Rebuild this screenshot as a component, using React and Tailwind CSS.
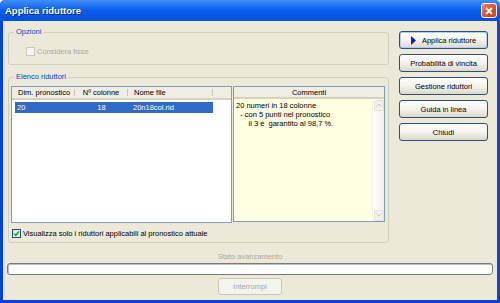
const listRows = [{ dim: "20", col: "18", file: "20n18col.rid" }];

const buttons = [
  "Applica riduttore",
  "Probabilità di vincita",
  "Gestione riduttori",
  "Guida in linea",
  "Chiudi",
];

function XpButton({ label, isDefault }) {
  return (
    <button
      type="button"
      className={
        "h-[18px] w-[89px] rounded-[3px] border border-[#2E5079] bg-gradient-to-b from-[#FFFFFF] via-[#F4F3EE] to-[#DCD8CC] text-black flex items-center justify-center gap-[6px] " +
        (isDefault ? "shadow-[inset_0_0_0_1px_#B4CDF0]" : "")
      }
    >
      {isDefault && (
        <svg width="5" height="9" viewBox="0 0 5 9">
          <polygon points="0,0 5,4.5 0,9" fill="#0B1FD6" />
        </svg>
      )}
      <span>{label}</span>
    </button>
  );
}

function Checkbox({ checked, disabled }) {
  return (
    <span
      className={
        "w-[9px] h-[9px] flex items-center justify-center border " +
        (disabled ? "border-[#CAC8BB] bg-[#F6F5F0]" : "border-[#1C5180] bg-gradient-to-br from-[#DCDCD7] to-[#FFFFFF]")
      }
    >
      {checked && (
        <svg width="7" height="7" viewBox="0 0 7 7">
          <polyline points="1,3.5 2.8,5.3 6,1.5" fill="none" stroke="#21A121" strokeWidth="1.6" />
        </svg>
      )}
    </span>
  );
}

export default function App() {
  return (
    <div className="w-[500px] h-[303px] flex flex-col bg-[#0842D6] font-[family-name:'Liberation_Sans',Arial,sans-serif] text-[7.5px] leading-[9px] text-black overflow-hidden rounded-t-[5px]">
      {/* title bar */}
      <div className="h-[21px] flex items-center justify-between bg-gradient-to-b from-[#3E8EF8] via-[#0A5CEE] to-[#0050E0]">
        <span className="pl-[5px] text-white font-bold text-[9.5px] [text-shadow:1px_1px_0_#0A2A8C]">
          Applica riduttore
        </span>
        <span className="mr-[3px] w-[16px] h-[15px] rounded-[3px] border border-white bg-gradient-to-br from-[#F0865E] via-[#E0552E] to-[#C6401C] flex items-center justify-center">
          <svg width="8" height="8" viewBox="0 0 8 8">
            <line x1="1" y1="1" x2="7" y2="7" stroke="white" strokeWidth="1.8" />
            <line x1="7" y1="1" x2="1" y2="7" stroke="white" strokeWidth="1.8" />
          </svg>
        </span>
      </div>

      {/* body */}
      <div className="flex-1 mx-[3px] mb-[3px] bg-[#ECE9D8] flex flex-col">
        <div className="flex px-[5px] gap-[10px]">
          <div className="w-[381px] flex flex-col">
            <fieldset className="mt-[6px] h-[38px] border border-[#D0D0BF] rounded-[3px]">
              <legend className="ml-[5px] px-[2px] leading-[10px] text-[#0046D5]">Opzioni</legend>
              <div className="mt-[10px] ml-[17px] flex items-center gap-[2px] text-[#ACA899]">
                <Checkbox disabled />
                <span>Considera fisse</span>
              </div>
            </fieldset>

            <fieldset className="mt-[7px] h-[171px] border border-[#D0D0BF] rounded-[3px]">
              <legend className="ml-[5px] px-[2px] leading-[10px] text-[#0046D5]">Elenco riduttori</legend>
              <div className="mt-[4px] ml-[2px] flex gap-[1px]">
                {/* list view */}
                <div className="w-[221px] h-[137px] border border-[#7F9DB9] bg-white flex flex-col">
                  <div className="h-[13px] flex bg-[#EFEDE4] border-b-2 border-[#D8D2BD]">
                    <div className="w-[63px] flex items-center pl-[6px] my-[2px] border-r border-[#C7C5B2]">Dim. pronostico</div>
                    <div className="w-[53px] flex items-center justify-center my-[2px] border-r border-[#C7C5B2]">Nº colonne</div>
                    <div className="w-[85px] flex items-center pl-[6px] my-[2px] border-r border-[#C7C5B2]">Nome file</div>
                    <div className="flex-1" />
                  </div>
                  <div className="mt-[2px]">
                    {listRows.map((r) => (
                      <div key={r.file} className="ml-[3px] w-[198px] h-[11px] flex items-center bg-[#316AC5] text-white">
                        <span className="w-[60px] pl-[2px]">{r.dim}</span>
                        <span className="w-[53px] text-center">{r.col}</span>
                        <span className="pl-[5px]">{r.file}</span>
                      </div>
                    ))}
                  </div>
                </div>

                {/* comments */}
                <div className="w-[152px] h-[136px] border border-[#7F9DB9] bg-[#FFFFE1] flex flex-col">
                  <div className="h-[12px] flex items-center justify-center bg-[#EFEDE4] border-b-2 border-[#D8D2BD]">
                    Commenti
                  </div>
                  <div className="flex flex-1">
                    <div className="flex-1 pl-[2px] pt-[2px] whitespace-pre">
                      <div>20 numeri in 18 colonne</div>
                      <div>{"  - con 5 punti nel pronostico"}</div>
                      <div>{"      il 3 è  garantito al 98,7 %."}</div>
                    </div>
                    <div className="w-[12px] flex flex-col justify-between bg-gradient-to-r from-[#FFFFFF] to-[#F0EFE8] border-l border-[#F3F2EC]">
                      <div className="h-[11px] m-[0.5px] rounded-[2px] bg-[#F2F1EB] border border-[#E4E2D8] flex items-center justify-center">
                        <svg width="6" height="4" viewBox="0 0 6 4">
                          <polyline points="0.5,3.5 3,1 5.5,3.5" fill="none" stroke="#C9C7BA" strokeWidth="1" />
                        </svg>
                      </div>
                      <div className="h-[11px] m-[0.5px] rounded-[2px] bg-[#F2F1EB] border border-[#E4E2D8] flex items-center justify-center">
                        <svg width="6" height="4" viewBox="0 0 6 4">
                          <polyline points="0.5,0.5 3,3 5.5,0.5" fill="none" stroke="#C9C7BA" strokeWidth="1" />
                        </svg>
                      </div>
                    </div>
                  </div>
                </div>
              </div>

              <div className="mt-[6px] ml-[3px] flex items-center gap-[2px]">
                <Checkbox checked />
                <span>Visualizza solo i riduttori applicabili al pronostico attuale</span>
              </div>
            </fieldset>
          </div>

          <div className="mt-[10px] flex flex-col gap-[5px]">
            {buttons.map((b, i) => (
              <XpButton key={b} label={b} isDefault={i === 0} />
            ))}
          </div>
        </div>

        <div className="mt-[9px] text-center text-[#ACA899]">Stato avanzamento</div>
        <div className="mt-[2px] ml-[4px] w-[486px] h-[12px] rounded-[3px] border border-[#7A7A7A] bg-white shadow-[inset_1px_1px_0_#BEBEBE]" />
        <div className="mt-[3px] flex justify-center">
          <button
            type="button"
            disabled
            className="w-[64px] h-[17px] rounded-[3px] border border-[#C9C7BA] bg-[#F4F3EE] text-[#ACA899]"
          >
            Interrompi
          </button>
        </div>
      </div>
    </div>
  );
}
